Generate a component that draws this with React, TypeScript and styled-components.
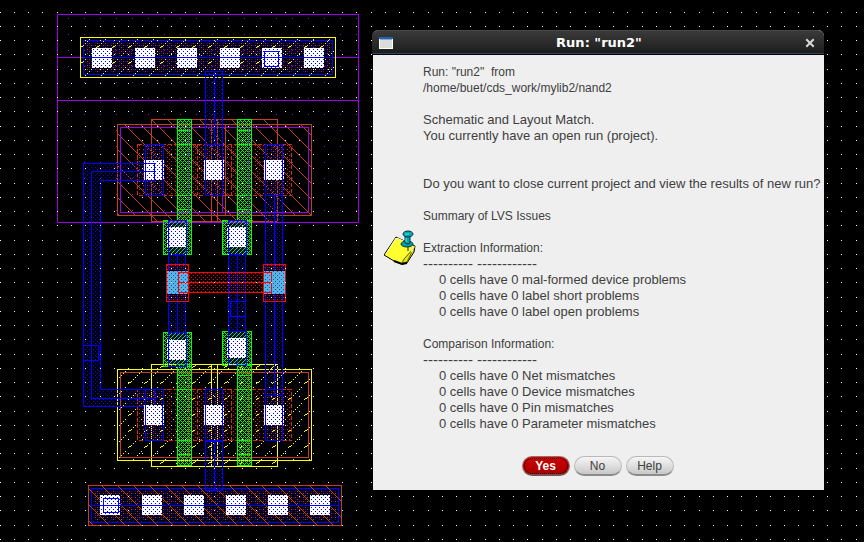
import React from "react";
import styled, { createGlobalStyle } from "styled-components";

const C = {
  blue: "#0000ff",
  purple: "#9900e6",
  yellow: "#ffff00",
  brown: "#bf4026",
  red: "#ff0000",
  active: "#d92b0d",
  green: "#00ff00",
  cyan: "#38bfff",
};

const GlobalStyle = createGlobalStyle`
  body {
    margin: 0;
    background: #000;
    font-family: "Liberation Sans", Arial, sans-serif;
  }
`;

const Desktop = styled.main`
  position: relative;
  min-height: 100vh;
  overflow: hidden;
  background: #000;
`;

const LayoutCanvas = styled.svg`
  display: block;
  width: 100%;
  height: 100vh;
  min-height: 530px;
  shape-rendering: crispEdges;
`;

const Dialog = styled.section`
  position: absolute;
  left: 372px;
  top: 30px;
  min-width: 452px;
  box-sizing: border-box;
  background: #efefef;
  border-left: 1px solid #000;
  border-radius: 6px 6px 0 0;
`;

const TitleBar = styled.header`
  display: flex;
  align-items: center;
  height: 25px;
  box-sizing: border-box;
  margin-left: -1px;
  padding: 0 9px 0 7px;
  border-top: 1px solid #4a4a4a;
  border-bottom: 1px solid #000;
  border-radius: 6px 6px 0 0;
  background: linear-gradient(#3a3a3a, #2b2b2b 50%, #1c1c1c);
  box-shadow: inset 0 -1px 0 #2d4560;
`;

const Title = styled.h1`
  flex: 1;
  margin: 0;
  text-align: center;
  color: #fff;
  font: bold 13px/22px "DejaVu Sans", sans-serif;
`;

const CloseButton = styled.button`
  display: flex;
  padding: 0;
  border: 0;
  background: none;
`;

const Content = styled.div`
  display: flex;
  align-items: center;
  padding: 9px 0 24px 11px;
`;

const NoteIcon = styled.svg`
  flex: none;
  width: 34px;
  height: 36px;
  margin-right: 5px;
`;

const Message = styled.div`
  color: #404040;
  font-size: 12px;
  line-height: 16px;
  white-space: nowrap;
`;

const Paragraph = styled.p<{ $after?: number; $large?: boolean }>`
  margin: 0 0 ${(p) => p.$after ?? 16}px;
  font-size: ${(p) => (p.$large ? 13 : 12)}px;
`;

const Heading = styled.h2`
  margin: 0;
  font-size: 12px;
  font-weight: normal;
  line-height: 16px;
`;

const Dashes = styled.p`
  margin: 0;
  font-size: 15px;
  line-height: 16px;
`;

const IssueList = styled.ul<{ $last?: boolean }>`
  margin: 0 0 ${(p) => (p.$last ? 0 : 16)}px;
  padding: 0 0 0 16px;
  font-size: 13px;
  list-style: none;
`;

const Actions = styled.footer`
  display: flex;
  justify-content: center;
  gap: 4px;
  padding: 0 2px 14px 0;
`;

const Button = styled.button<{ $primary?: boolean }>`
  width: 48px;
  height: 20px;
  padding: 0;
  border: 1px solid ${(p) => (p.$primary ? "#8f7070" : "#b9b9b9")};
  border-bottom: 2px solid ${(p) => (p.$primary ? "#7d5050" : "#8c8c8c")};
  border-radius: 10px;
  background: ${(p) =>
    p.$primary ? "linear-gradient(#cf0000, #a80000)" : "linear-gradient(#f6f6f6, #c8c8c8)"};
  color: ${(p) => (p.$primary ? "#fff" : "#404040")};
  font: ${(p) => (p.$primary ? "bold" : "normal")} 12px/16px "Liberation Sans", Arial, sans-serif;
  outline: ${(p) => (p.$primary ? "1px dotted #200" : "none")};
  outline-offset: -3px;
`;

type BoxProps = { b: number[]; stroke?: string; fill?: string; dash?: string };

/* Draws a one-pixel outline between inclusive corners [x1, y1, x2, y2]. */
const Box = ({ b: [x1, y1, x2, y2], stroke, fill = "none", dash }: BoxProps) => (
  <>
    {fill !== "none" && <rect x={x1} y={y1} width={x2 - x1} height={y2 - y1} fill={fill} />}
    {stroke && (
      <rect
        x={x1 + 0.5}
        y={y1 + 0.5}
        width={x2 - x1}
        height={y2 - y1}
        fill="none"
        stroke={stroke}
        strokeDasharray={dash}
      />
    )}
  </>
);

const V = ({ x, y1, y2, c, dash }: { x: number; y1: number; y2: number; c: string; dash?: string }) => (
  <path d={`M${x + 0.5} ${y1}V${y2}`} stroke={c} strokeDasharray={dash} />
);
const H = ({ y, x1, x2, c }: { y: number; x1: number; x2: number; c: string }) => (
  <path d={`M${x1} ${y + 0.5}H${x2}`} stroke={c} />
);

const dots = (pts: number[][]) => pts.map(([x, y]) => `M${x} ${y}h1v1h-1z`).join("");

const Dots = ({ id, w, h, c, pts }: { id: string; w: number; h: number; c: string; pts: number[][] }) => (
  <pattern id={id} width={w} height={h} patternUnits="userSpaceOnUse">
    <path d={dots(pts)} fill={c} />
  </pattern>
);

const gridPoints = Array.from({ length: 60 }, (_, n) => Math.floor(0.18 + 14.264 * n)).flatMap((x) =>
  [12, 26, 40, 54].map((y) => [x, y])
);
const downhill = Array.from({ length: 16 }, (_, i) => [i, i]);
const uphill = [[0, 15], [1, 14], [2, 14], [3, 13], [5, 11], [7, 9], [9, 7], [11, 5], [13, 3]];

const metalStub = (x: number, y1: number, y2: number) => (
  <>
    <Box b={[x, y1, x + 17, y2]} fill="url(#metal)" stroke={C.blue} />
    <V x={x + 9} y1={y1} y2={y2} c={C.blue} />
  </>
);

const Contact = ({ x, y }: { x: number; y: number }) => (
  <>
    <rect x={x} y={y} width="20" height="20" fill="#fff" />
    <rect x={x} y={y} width="20" height="20" fill="url(#metal)" />
  </>
);

const Device = ({ top, implant, well, hatch }: { top: number; implant: string; well: string; hatch: string }) => {
  const bottom = top + 51;
  return (
    <>
      <Box b={[117, top - 20, 311, bottom + 20]} fill={`url(#${hatch})`} stroke={implant} />
      <Box b={[151, top - 25, 277, bottom + 26]} fill={`url(#${hatch})`} stroke={implant} />
      <Box b={[120, top - 17, 308, bottom + 17]} stroke={well} />
      <V x={211} y1={top - 25} y2={bottom + 26} c={implant} />
      <V x={217} y1={top - 25} y2={bottom + 26} c={implant} />
      <Box b={[137, top, 291, bottom]} fill="url(#diffusion)" stroke={C.active} dash="4 2" />
      {[197, 231].map((x) => (
        <V key={x} x={x} y1={top} y2={bottom} c={C.active} dash="4 2" />
      ))}
      {[177, 237].map((x) => (
        <g key={x}>
          <Box b={[x, top - 25, x + 14, bottom + 25]} fill="url(#poly)" stroke={C.green} />
          {[top - 14, top, bottom, bottom + 14].map((y) => (
            <H key={y} y={y} x1={x} x2={x + 14} c={C.green} />
          ))}
          <V x={x + 11} y1={top - 17} y2={bottom + 17} c={well} dash="8 3" />
        </g>
      ))}
      {[145, 205, 265].map((x) => (
        <Box key={x} b={[x, top, x + (x < 200 ? 18 : 17), bottom]} fill="url(#metal)" stroke={C.blue} />
      ))}
    </>
  );
};

const DeviceContacts = ({ y }: { y: number }) => (
  <>
    {[144, 204, 264].map((x) => (
      <g key={x}>
        <Contact x={x} y={y} />
        <V x={x + 1} y1={y} y2={y + 20} c={C.blue} />
        <V x={x + 18} y1={y} y2={y + 20} c={C.blue} />
      </g>
    ))}
  </>
);

type RailProps = { x: number; y: number; w: number; c: string; hatch: string; taps: number[]; tapY: number };
const Rail = ({ x, y, w, c, hatch, taps, tapY }: RailProps) => (
  <>
    <Box b={[x + 3, y + 3, x + w - 3, y + 37]} fill="url(#metal)" stroke={C.blue} />
    <Box b={[x + 5, y + 5, x + w - 5, y + 35]} fill="url(#diffusion)" />
    <Box b={[x, y, x + w, y + 40]} fill={`url(#${hatch})`} stroke={c} />
    {taps.map((t) => (
      <Contact key={t} x={t} y={tapY} />
    ))}
    <H y={y + 20} x1={x + 3} x2={x + w - 3} c={C.blue} />
  </>
);

const GateContact = ({ x, y, w, cy }: { x: number; y: number; w: number; cy: number }) => {
  const left = x + w - 23;
  return (
    <>
      <Box b={[x, y, x + w, y + 34]} fill="url(#poly)" stroke={C.green} />
      <Box b={[left, y, left + 18, y + 34]} stroke={C.blue} fill="url(#metal)" />
      <Contact x={left - 1} y={cy} />
      <V x={left} y1={cy} y2={cy + 20} c={C.blue} />
      <V x={left + 18} y1={cy} y2={cy + 20} c={C.blue} />
    </>
  );
};

const NandLayout = () => (
  <LayoutCanvas role="img" aria-label="NAND2 cell layout" fill="none">
    <defs>
      <Dots id="grid" w={856} h={57} c="#fff" pts={gridPoints} />
      <Dots id="well" w={16} h={16} c={C.purple} pts={[[4, 2]]} />
      <Dots id="metal" w={4} h={4} c={C.blue} pts={[[1, 1], [3, 3]]} />
      <Dots id="diffusion" w={8} h={4} c={C.active} pts={[[3, 1], [7, 1], [1, 3]]} />
      <Dots id="poly" w={4} h={4} c={C.green} pts={[[0, 0], [1, 1], [2, 2], [3, 3], [1, 3], [3, 1]]} />
      <Dots id="upper" w={4} h={4} c={C.red} pts={[[3, 1], [1, 3]]} />
      <Dots id="downhill" w={16} h={16} c={C.brown} pts={downhill} />
      <Dots id="uphill" w={16} h={16} c={C.yellow} pts={uphill} />
    </defs>

    <Box b={[57, 14, 358, 222]} fill="url(#well)" stroke={C.purple} />
    <H y={100} x1={57} x2={358} c={C.purple} />
    <H y={57} x1={57} x2={358} c={C.purple} />

    <Rail x={80} y={37} w={255} c={C.yellow} hatch="uphill" taps={[92, 135, 177, 220, 262, 304]} tapY={48} />
    <Box b={[264, 51, 278, 66]} stroke={C.blue} />
    <Rail x={88} y={485} w={253} c={C.brown} hatch="downhill" taps={[100, 142, 184, 226, 268, 310]} tapY={495} />
    <Box b={[103, 498, 118, 512]} stroke={C.blue} />

    <Device top={144} implant={C.brown} well={C.purple} hatch="downhill" />
    <V x={225} y1={124} y2={215} c={C.brown} />
    <V x={222} y1={195} y2={212} c={C.purple} />
    <Device top={389} implant={C.yellow} well={C.brown} hatch="uphill" />

    {metalStub(205, 71, 144)}
    {metalStub(205, 441, 490)}
    {metalStub(265, 195, 395)}
    {metalStub(168, 220, 366)}
    {metalStub(228, 220, 365)}
    <Box b={[230, 301, 245, 316]} stroke={C.blue} />

    <path
      d="M83.500 163.500H154.500V180.500H100.500V389.500H154.500V406.500H83.500Z"
      fill="url(#metal)"
      stroke={C.blue}
    />
    <path d="M154 171.500H91.500V398.500H154" stroke={C.blue} />
    <Box b={[83, 345, 98, 360]} stroke={C.blue} />

    <DeviceContacts y={160} />
    <DeviceContacts y={405} />
    <path d="M144 163.500H154.500V180M144 171.500H154" stroke={C.blue} />

    <GateContact x={163} y={220} w={28} cy={227} />
    <GateContact x={222} y={220} w={29} cy={227} />
    <GateContact x={163} y={332} w={28} cy={340} />
    <GateContact x={222} y={331} w={29} cy={338} />

    <rect x="166" y="271" width="23" height="23" fill={C.cyan} />
    <rect x="264" y="271" width="22" height="23" fill={C.cyan} />
    <Box b={[166, 264, 188, 301]} fill="url(#upper)" stroke={C.red} />
    <Box b={[263, 264, 285, 301]} fill="url(#upper)" stroke={C.red} />
    <Box b={[178, 272, 271, 292]} fill="url(#upper)" stroke={C.red} />
    <H y={282} x1={178} x2={271} c={C.red} />

    <rect width="100%" height="100%" fill="url(#grid)" />
  </LayoutCanvas>
);

const WindowGlyph = () => (
  <svg width="14" height="12" viewBox="0 0 14 12" shapeRendering="crispEdges" aria-hidden="true">
    <path d="M0 0h14v12H0z" fill="#fff" />
    <path d="M0 0h14v2H0z" fill="#2860b0" />
    <path d="M1 2h12v1H1z" fill="#7faadd" />
    <path d="M1 3h12v8H1z" fill="#dcdcd8" />
  </svg>
);

const StickyNote = () => (
  <NoteIcon viewBox="0 0 34 36" aria-hidden="true">
    <path d="M12 7 31 16 30 22 23 33 18 34 10 31 0 25Z" fill="#ffff30" stroke="#000" strokeLinejoin="round" />
    <path d="M12 8 2 24M13 8 28 15" stroke="#ffffc0" />
    <path d="M30 18 23 32 18 33 20 29Z" fill="#e6e600" stroke="#555500" />
    <path d="M10 31 18 34 23 33" fill="none" stroke="#000" strokeWidth="2" />
    <path d="M25 19 31 16 28 23Z" fill="#eeee88" />
    <path d="M24 16v5" stroke="#222" />
    <ellipse cx="23" cy="14" rx="6" ry="3" fill="#009ca8" stroke="#003840" />
    <path d="M21 6h5v7q-2 2-5 0Z" fill="#00a5b0" stroke="#003840" />
    <ellipse cx="24" cy="4" rx="5" ry="3" fill="#00a5b0" stroke="#003840" />
    <path d="M21 4h4M22 8v4" stroke="#70e0e8" />
  </NoteIcon>
);

const extraction = ["mal-formed device problems", "label short problems", "label open problems"];
const comparison = ["Net mismatches", "Device mismatches", "Pin mismatches", "Parameter mismatches"];

export default function App() {
  return (
    <Desktop>
      <GlobalStyle />
      <NandLayout />
      <Dialog role="dialog" aria-labelledby="dialog-title">
        <TitleBar>
          <WindowGlyph />
          <Title id="dialog-title">Run: "run2"</Title>
          <CloseButton type="button" aria-label="Close">
            <svg width="10" height="10" viewBox="0 0 10 10" aria-hidden="true">
              <path d="M2 2 8 8M8 2 2 8" stroke="#d8d8d8" strokeWidth="2" strokeLinecap="square" />
            </svg>
          </CloseButton>
        </TitleBar>
        <Content>
          <StickyNote />
          <Message>
            <Paragraph>
              Run: "run2"&nbsp; from
              <br />
              /home/buet/cds_work/mylib2/nand2
            </Paragraph>
            <Paragraph $after={32} $large>
              Schematic and Layout Match.
              <br />
              You currently have an open run (project).
            </Paragraph>
            <Paragraph $large>Do you want to close current project and view the results of new run?</Paragraph>
            <Paragraph>Summary of LVS Issues</Paragraph>
            <Heading>Extraction Information:</Heading>
            <Dashes>---------- ------------</Dashes>
            <IssueList>
              {extraction.map((t) => (
                <li key={t}>0 cells have 0 {t}</li>
              ))}
            </IssueList>
            <Heading>Comparison Information:</Heading>
            <Dashes>---------- ------------</Dashes>
            <IssueList $last>
              {comparison.map((t) => (
                <li key={t}>0 cells have 0 {t}</li>
              ))}
            </IssueList>
          </Message>
        </Content>
        <Actions>
          <Button type="button" $primary>
            Yes
          </Button>
          <Button type="button">No</Button>
          <Button type="button">Help</Button>
        </Actions>
      </Dialog>
    </Desktop>
  );
}
